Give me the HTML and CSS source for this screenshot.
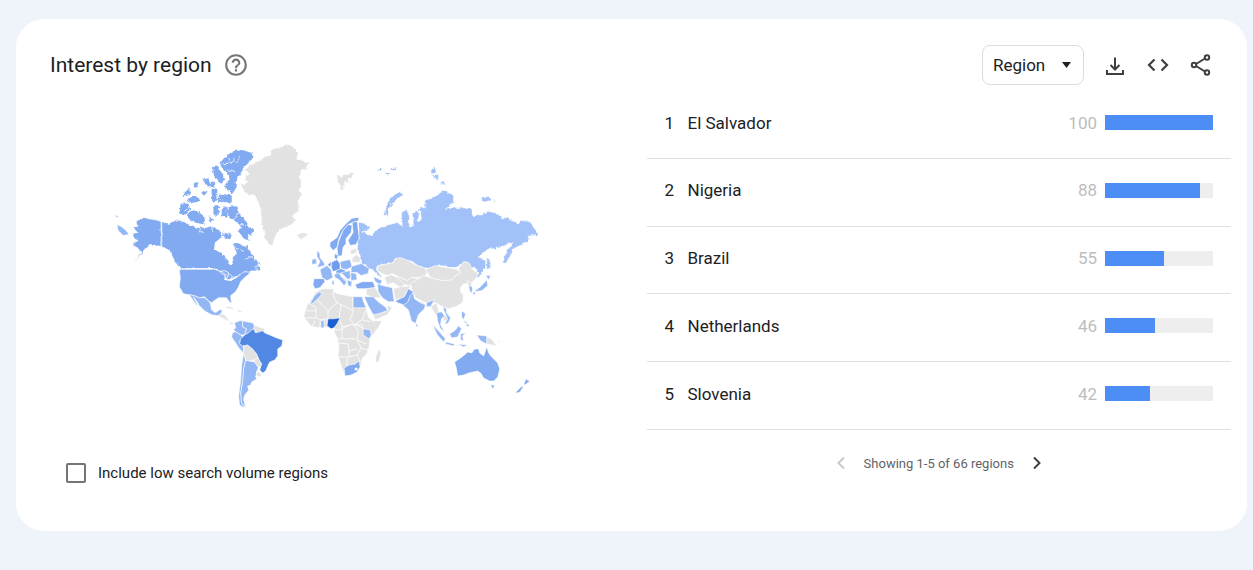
FILE: index.html
```html
<!DOCTYPE html>
<html lang="en">
<head>
    <meta charset="UTF-8">
    <meta name="viewport" content="width=device-width, initial-scale=1.0">
    <title>Interest by region</title>
    <link rel="stylesheet" href="styles.css">
</head>
<body>
    <main class="card">
        <header class="card-header">
            <h1>Interest by region</h1>
            <button class="icon-button help" aria-label="Help">
                <svg width="26" height="26" viewBox="0 0 24 24" fill="currentColor"><path d="M11 18h2v-2h-2v2zm1-16C6.480 2 2 6.480 2 12s4.480 10 10 10 10-4.480 10-10S17.520 2 12 2zm0 18c-4.410 0-8-3.590-8-8s3.590-8 8-8 8 3.590 8 8-3.590 8-8 8zm0-14c-2.210 0-4 1.790-4 4h2c0-1.100.9-2 2-2s2 .9 2 2c0 2-3 1.750-3 5h2c0-2.250 3-2.500 3-5 0-2.210-1.790-4-4-4z"/></svg>
            </button>
            <div class="tools">
                <div class="select-box">
                    <select id="resolution" aria-label="Resolution">
                        <option>Region</option>
                        <option>City</option>
                    </select>
                    <svg class="caret" width="9" height="6" viewBox="0 0 9 6"><path d="M0 0h9L4.500 6z" fill="#202124"/></svg>
                </div>
                <button class="icon-button" aria-label="Download">
                    <svg width="24" height="24" viewBox="0 0 24 24" fill="none" stroke="currentColor" stroke-width="2"><path d="M12 4.500v12M7.500 12l4.500 4.500 4.500-4.500M4 17v4h16v-4"/></svg>
                </button>
                <button class="icon-button" aria-label="Embed">
                    <svg width="24" height="24" viewBox="0 0 24 24" fill="none" stroke="currentColor" stroke-width="2.200"><path d="M8.500 6.500L3 12l5.500 5.500M15.500 6.500L21 12l-5.500 5.500"/></svg>
                </button>
                <button class="icon-button" aria-label="Share">
                    <svg width="24" height="24" viewBox="0 0 24 24" fill="none" stroke="currentColor" stroke-width="2"><circle cx="5" cy="12" r="2.200"/><circle cx="18" cy="4.500" r="2.200"/><circle cx="18" cy="19.500" r="2.200"/><path d="M7 11l9-5.500M7 13l9 5.500"/></svg>
                </button>
            </div>
        </header>

        <div class="content">
            <section class="map-panel">
                <svg class="map" viewBox="110 140 440 275" role="img" aria-label="World map">
                    <defs>
                        <filter id="coast" x="-5%" y="-5%" width="110%" height="110%">
                            <feTurbulence type="fractalNoise" baseFrequency="0.25" numOctaves="2" seed="4"/>
                            <feDisplacementMap in="SourceGraphic" scale="4" xChannelSelector="R" yChannelSelector="G"/>
                        </filter>
                    </defs>

                    <!-- North America -->
                    <g class="land mid" filter="url(#coast)">
                        <path d="M133 227L138 226 137 222 143 217 153 219 162 221 162 246 157 245 152 244 147 248 143 253 136 259 142 252 138 247 134 243 139 239 134 237 133 233 139 232z"/>
                        <path d="M162 221L170 223 178 219 185 222 192 225 198 227 207 227 213 225 218 229 223 231 222 237 216 242 215 248 222 253 227 257 231 265 234 263 233 257 237 253 234 245 235 242 240 243 245 247 248 245 253 255 259 263 261 268 254 270 250 271 246 272 240 274 232 278 228 279 224 274 218 269 214 268 182 268 175 260 170 250 162 246z"/>
                        <g transform="translate(110 140) scale(.3333)">
                            <path d="M330 70L345 52 370 33 400 30 425 38 432 52 415 70 400 85 390 105 378 125 382 140 370 160 355 152 343 135 360 125 358 105 340 88z"/>
                            <path d="M310 78L325 76 337 100 347 118 335 132 325 120 312 105z"/>
                            <path d="M213 190L237 190 242 205 227 224 211 218zM233 222L250 206 272 213 287 235 282 252 260 247 243 242z"/>
                            <path d="M223 155L245 145 240 165 220 170zM233 175L262 166 274 182 245 190zM253 128L268 126 264 142 254 142zM279 117L297 114 305 136 290 140zM280 150L294 153 287 168 280 164z"/>
                            <path d="M306 148L320 148 322 182 308 184zM327 160L367 164 367 187 325 185zM311 195L329 195 329 222 313 227zM337 203L354 199 354 232 336 227zM299 223L314 240 302 247zM304 125L318 130 316 143 304 140z"/>
                            <path d="M360 198L380 198 387 217 402 230 414 250 430 270 427 287 414 281 420 302 400 291 383 270 395 262 380 245 362 232 350 215zM343 273L367 284 361 297 340 290z"/>
                        </g>
                        <path class="lines" d="M222 164l8-1 5-4M229 158l4 6M236 172l-8-3M240 157l-3 6M191 211l6-5 3 8M185 211l4-3M230 193l6 6M240 213l-7 6M246 224l-9 1M201 225l-2 6 5 1M212 225l1 6M236 247l8 4M219 196l4 4M252 256l-7 3"/>
                        <path d="M256 267L260 265 262 270 257 270zM141 255L137 259 135 260z"/>
                    </g>
                    <g class="land mid">
                        <path d="M182 268.500L214 268.500 222 271 227 274 225 279 231 280 238 276 243 272 247 271 250 273 245 277 241 281 239 286 236 291 231 295 232 303 229 300 227 297 219 297 212 302 209 300 205 296 200 297 195 295 184 293 180 286 181 277 180 270z"/>
                    </g>
                    <path class="lines" d="M162.500 220V246M182 268.500H214M220 271l5-1 4 2-1 5-2 2-1-5-3-1zM229 273l4 3-4 4M231 280l7-4"/>
                    <g class="land soft">
                        <path d="M190 294L195 295 200 297 205 297 209 300 211 303 212 309 216 312 220 309 223 309 221 314 218 315 212 314 205 310 200 305 197 300 194 296 199 306 196 303z"/>
                        <path d="M118 224L122 226 127 230 130 234 124 235 119 230zM116 214L120 217 117 217z"/>
                    </g>
                    <g class="land none">
                        <path d="M218 315L223 313 227 316 230 321 226 319 222 317zM230 321L236 323 231 324zM224 306L231 306 236 309 229 308zM238 309L244 311 239 312z"/>
                    </g>

                    <!-- Greenland, Iceland, Svalbard -->
                    <g class="land none" filter="url(#coast)">
                        <path transform="translate(230 140) scale(.3333)" d="M60 75L85 62 110 50 125 42 120 30 150 22 170 13 190 20 205 38 200 55 225 65 240 68 230 85 215 90 210 110 216 130 208 150 214 165 205 180 210 200 200 215 185 230 200 240 180 255 160 262 145 275 135 290 128 316 112 308 105 290 100 265 95 250 98 225 92 205 85 180 75 165 50 160 33 135 55 125 45 115 60 100 48 90z"/>
                        <path d="M297 235L302 232 308 233 306 236 301 239z"/>
                        <path d="M336 176L343 175 352 172 355 175 348 178 350 183 345 182 343 191 340 187 338 180z"/>
                    </g>

                    <!-- South America -->
                    <g class="land soft">
                        <path d="M235 322L240 320 243 320 243 326 247 328 245 334 241 334 236 331 234 329 236 327z"/>
                        <path d="M243 320L247 321 253 322 256 327 252 329 250 332 245 334 247 328 243 326z"/>
                        <path d="M233 332L236 331 241 334 245 338 240 340 241 343 244 346 244 352 240 348 236 342 232 336z"/>
                        <path d="M246 359L250 360 255 361 259 366 257 371 256 376 257 378 252 381 251 384 248 385 249 389 245 394 244 398 246 406 242 402 241 392 243 380 244 367z"/>
                        <path d="M244 352L246 359 244 367 243 380 241 392 242 402 246 407 240 404 239 395 241 380 242 365z"/>
                    </g>
                    <g class="land none">
                        <path d="M255 324L259 326 265 328 264 331 257 332 254 328z"/>
                        <path d="M244 345L248 344 253 348 257 353 258 357 254 359 250 360 246 359 244 352z"/>
                        <path d="M254 359L258 357 261 361 262 365 258 366z"/>
                        <path d="M257 370L262 373 261 376 257 375z"/>
                    </g>
                    <path class="land brazil" d="M241 338L245 334 249 332 252 329 254 328 256 332 263 330 265 332 270 334 277 337 283 339 282 345 278 348 278 355 275 359 270 361 268 365 266 370 263 372 260 369 262 363 259 358 257 353 253 348 248 344 243 345 240 343z"/>

                    <!-- Russia and the Arctic islands -->
                    <g class="land russia" filter="url(#coast)">
                        <path d="M358 222L365 223 370 227 369 230 363 231 367 234 372 235 375 230 380 227 385 226 390 224 397 222 402 226 401 213 405 209 409 214 409 225 412 226 412 214 416 210 419 213 418 220 421 220 420 211 417 208 425 207 424 202 430 197 437 195 443 189 453 195 453 202 445 209 453 207 470 208 472 215 478 215 487 211 498 213 500 217 507 218 517 223 520 220 528 221 535 230 537 236 532 235 527 236 528 241 520 245 513 247 511 253 505 263 503 262 503 255 512 242 510 242 500 247 487 249 482 253 478 257 485 260 485 267 478 277 475 277 478 272 475 268 470 267 467 262 463 261 458 266 452 266 438 265 433 267 425 268 420 266 412 262 400 258 395 258 393 262 378 265 377 270 382 277 378 275 373 270 368 267 362 264 360 255 357 250 358 240 359 230z"/>
                        <path d="M383 215L385 207 389 199 400 191 403 194 393 202 389 208 388 216z"/>
                        <path d="M430 171L434 166 436 172 432 174zM431 175L438 174 438 181zM439 184L443 180 445 185zM480 198L488 196 490 200 483 202zM492 199L497 201 493 201zM376 170L381 168 382 171zM384 172L390 173 387 175zM390 168L397 167 395 171zM486 257L489 259 489 268 486 269z"/>
                    </g>

                    <!-- Europe -->
                    <g class="land mid">
                        <path d="M330 242L337 237 340 230 346 223 352 218 358 217 359 220 353 222 348 224 343 230 339 238 337 247 333 250 330 246z"/>
                        <path d="M339 240L343 230 348 224 352 225 351 232 346 238 346 243 343 247 342 255 338 256 337 248z"/>
                        <path d="M352 222L357 221 358 228 359 238 356 244 350 245 348 240 353 232z"/>
                        <path d="M314 278L324 278 325 281 320 287 315 288 313 284z"/>
                        <path d="M355 284L362 281 373 281 375 287 367 288 357 288z"/>
                        <path d="M331 262L337 259 340 263 340 269 333 271 331 266zM328 264l3-3 1 4-3 1z" class="strong"/>
                        <path d="M334 257L335 253 338 255 337 259zM336 270L341 268 346 270 344 273 336 273z"/>
                    </g>
                    <g class="land soft">
                        <path d="M317 250L320 253 320 257 324 262 325 265 317 267 320 261 317 256z"/>
                        <path d="M312 259L316 258 317 263 312 264z"/>
                        <path d="M320 269L327 265 331 269 333 277 327 280 322 277z"/>
                        <path d="M340 261L350 259 352 266 347 269 341 268z"/>
                        <path d="M351 266L361 263 369 268 368 273 361 275 357 272 351 272z"/>
                        <path d="M334 274L339 272 341 276 347 281 344 285 339 279 335 277z"/>
                        <path d="M341 272L350 270 351 277 348 279zM350 272L356 273 357 279 351 280zM347 279L352 281 351 286 348 285zM373 276L382 280 380 284 375 281zM332 280h2v4h-2z"/>
                    </g>
                    <g class="land none">
                        <path d="M350 250L356 248 357 252 351 254zM352 258L356 254 360 257 360 262 352 262zM343 277l3 1 1 4-3-3z"/>
                    </g>

                    <!-- Asia -->
                    <g class="land none">
                        <path d="M378 265L393 262 395 258 400 257 408 260 415 264 423 267 428 270 424 276 418 277 411 277 407 280 400 277 392 273 387 275 382 273 377 270z"/>
                        <path d="M384 277L391 274 399 278 404 284 401 287 393 282 387 284z"/>
                        <path d="M393 275L400 277 407 280 411 277 419 278 417 283 409 285 404 284 399 279z"/>
                        <path d="M393 288L400 286 411 285 406 291 403 297 395 299z"/>
                        <path d="M410 283L417 279 423 275 430 277 442 280 452 279 455 275 460 272 458 268 463 261 468 262 472 269 478 273 475 278 470 283 463 283 460 287 460 291 463 295 462 302 455 306 448 308 442 306 435 302 425 302 415 297 412 290z"/>
                        <path d="M425 269L435 265 440 266 453 268 459 270 460 272 455 275 452 279 442 280 430 277z"/>
                        <path d="M366 288L375 287 381 297 374 297 366 294zM373 314L387 310 387 304 392 307 387 314 375 319z"/>
                        <path d="M430 306L436 302 438 309 438 318 434 312zM442 315L447 315 447 320 443 320zM466 280l5 2 0 4-3-1zM416 300l8 2v2l-7-2z"/>
                        <path d="M486 336L491 338 496 345 486 343zM497 340l3-1-2 3z"/>
                    </g>
                    <g class="land soft">
                        <path d="M377 283L383 285 392 287 394 301 388 301 382 297 378 291z"/>
                        <path d="M364 296L373 296 378 301 386 307 387 310 378 313 373 314 368 305z"/>
                        <path d="M402 304L408 300 410 293 413 292 414 298 420 302 425 304 424 308 418 314 415 323 411 320 408 309z"/>
                        <path d="M426 302L434 299 430 306 426 306zM415 322l3 3-2 1z"/>
                        <path d="M436 312L441 311 444 315 441 318 440 324 444 331 440 328 437 320z"/>
                        <path d="M442 306L446 308 446 312 450 317 448 322 444 324 447 318z"/>
                        <path d="M432 324L438 330 445 338 443 341 437 334zM445 341L454 343 453 345 445 343zM449 333L454 330 458 325 461 328 457 336 451 337zM460 333L465 332 462 335 463 340 460 339zM457 343l10 1-4 2z"/>
                        <path d="M461 310L465 313 463 319 461 316zM466 322l3 3-3 1zM463 319l4 3-2 1z"/>
                        <path d="M476 334L486 335 486 343 480 340zM468 284L472 287 471 293 469 290zM485 275L490 275 488 279zM486 279L487 285 481 290 473 291 480 286zM472 291l3 1-2 3z"/>
                    </g>
                    <path class="land mid" d="M395 300L404 296 408 288 413 291 410 295 407 302 403 304 397 302z"/>

                    <!-- Africa -->
                    <path class="land none" d="M315 292L322 288 333 288 335 292 342 294 353 296 362 297 366 307 368 316 372 320 382 320 378 327 370 337 369 345 367 352 362 358 360 365 353 372 345 375 342 367 338 355 339 345 337 337 334 330 335 327 328 326 320 327 312 326 305 318 304 315 307 305 312 298z"/>
                    <path class="lines" d="M318 291l-1 6-9 6M310 303l6 4 0 10-11 0M316 298l12 12 9-8-4-8 1-6M337 302l4 2 12 6M353 296v16l-3 6 4 6 8 0M341 304l-2 13M366 309l-4 10-8 5M339 317l3 9 8-2 4 0M316 317l5 2 7-1M327 325l0-7M320 327v-7M312 326l3-6M362 319l8 2M362 324l2 10M350 324l-10 5-5 0M354 324l4 6-1 9 4 8M342 326l0 12-5 0M338 342l10 1 1 7 8-2M349 350l0 6-11 0M357 339l9 4M361 347l7 2M349 356l8-2 4-7M347 357l0 8M357 354l3 6-6 4M342 338l14 0M328 310l0 8M307 310l9 0M356 324l8 4"/>
                    <path class="land none" d="M379 348L381 352 378 362 375 360 376 354z"/>
                    <g class="land soft">
                        <path d="M353 296L362 296 363 300 366 307 353 307z"/>
                        <path d="M310 303L314 296 319 291 322 293 318 298 312 303z"/>
                        <path d="M363 328L370 329 371 334 369 338 363 334zM321 320L324 320 324 327 321 327z"/>
                    </g>
                    <path class="land mid" d="M344 367L349 364 355 363 359 360 360 366 357 371 351 374 345 375z"/>
                    <circle cx="356" cy="368" r="1.500" fill="#fff"/>
                    <path class="land top" d="M328 318L334 318 340 317 337 323 334 327 331 328 327 325z"/>

                    <!-- Oceania -->
                    <g class="land mid">
                        <path d="M454 361L460 357 465 353 467 351 471 352 474 348 478 348 479 352 483 355 486 346 488 352 490 355 497 362 499 368 497 376 493 380 489 380 483 377 480 372 477 370 468 372 463 374 457 375 456 368z"/>
                        <path d="M490 384L494 384 492 388zM523 383L525 378 529 380 524 384zM523 385L519 391 514 392 520 386z"/>
                    </g>
                </svg>
                <label class="low-volume">
                    <input type="checkbox">
                    Include low search volume regions
                </label>
            </section>

            <section class="list-panel">
                <table>
                    <tbody>
                        <tr>
                            <td class="rank">1</td>
                            <td class="name">El Salvador</td>
                            <td class="value">100</td>
                            <td class="bar"><div class="track"><div class="fill" style="width: 100%"></div></div></td>
                        </tr>
                        <tr>
                            <td class="rank">2</td>
                            <td class="name">Nigeria</td>
                            <td class="value">88</td>
                            <td class="bar"><div class="track"><div class="fill" style="width: 88%"></div></div></td>
                        </tr>
                        <tr>
                            <td class="rank">3</td>
                            <td class="name">Brazil</td>
                            <td class="value">55</td>
                            <td class="bar"><div class="track"><div class="fill" style="width: 55%"></div></div></td>
                        </tr>
                        <tr>
                            <td class="rank">4</td>
                            <td class="name">Netherlands</td>
                            <td class="value">46</td>
                            <td class="bar"><div class="track"><div class="fill" style="width: 46%"></div></div></td>
                        </tr>
                        <tr>
                            <td class="rank">5</td>
                            <td class="name">Slovenia</td>
                            <td class="value">42</td>
                            <td class="bar"><div class="track"><div class="fill" style="width: 42%"></div></div></td>
                        </tr>
                    </tbody>
                </table>
                <nav class="pager">
                    <button class="icon-button" aria-label="Previous" disabled>
                        <svg width="24" height="24" viewBox="0 0 24 24" fill="none" stroke="currentColor" stroke-width="2"><path d="M15 6.500L9.500 12l5.500 5.500"/></svg>
                    </button>
                    <span>Showing 1-5 of 66 regions</span>
                    <button class="icon-button" aria-label="Next">
                        <svg width="24" height="24" viewBox="0 0 24 24" fill="none" stroke="currentColor" stroke-width="2"><path d="M9 6.500l5.500 5.500L9 17.500"/></svg>
                    </button>
                </nav>
            </section>
        </div>
    </main>
</body>
</html>
```

FILE: styles.css
```css
* {
    box-sizing: border-box;
}

body {
    margin: 0;
    padding: 19px 6px 38px 16px;
    background-color: #eff3fa;
    color: #202124;
    font-family: Roboto, "Liberation Sans", sans-serif;
    font-size: 17px;
}

.card {
    background-color: #fff;
    border-radius: 28px;
    padding: 26px 16px 48px 34px;
}

.card-header {
    display: flex;
    align-items: center;
    height: 40px;
    padding-right: 18px;
}

h1 {
    margin: 0;
    font-size: 21px;
    font-weight: 400;
}

.icon-button {
    display: flex;
    padding: 0;
    border: none;
    background: none;
    color: #3c4043;
    cursor: pointer;
}

.icon-button:disabled {
    color: #c8c8c8;
    cursor: default;
}

.help {
    margin-left: 11px;
    color: #757575;
}

.tools {
    display: flex;
    align-items: center;
    gap: 19px;
    margin-left: auto;
}

.select-box {
    display: grid;
    align-items: center;
}

.select-box select,
.caret {
    grid-area: 1 / 1;
}

.select-box select {
    appearance: none;
    width: 102px;
    height: 40px;
    padding: 0 10px;
    border: 1px solid #dadce0;
    border-radius: 8px;
    background-color: #fff;
    color: #202124;
    font-family: inherit;
    font-size: 17px;
}

.caret {
    justify-self: end;
    margin-right: 13px;
    pointer-events: none;
}

.content {
    display: grid;
    grid-template-columns: 1fr 1fr;
    gap: 12px;
}

.map-panel {
    display: flex;
    flex-direction: column;
    padding: 55px 16px 0;
}

.map {
    display: block;
    width: 80%;
    margin-left: 43px;
}

.land {
    stroke: #fff;
    stroke-width: 0.6;
    stroke-linejoin: round;
}

.lines {
    fill: none;
    stroke: #fff;
    stroke-width: 0.8;
}

.none {
    fill: #e2e2e2;
}

.russia {
    fill: #a2c1f8;
}

.soft {
    fill: #93b6f5;
}

.mid {
    fill: #81aaf0;
}

.strong {
    fill: #6f9dec;
}

.brazil {
    fill: #5088e3;
}

.top {
    fill: #1b5fd3;
}

.low-volume {
    display: flex;
    align-items: center;
    gap: 12px;
    margin-top: 47px;
    font-size: 15px;
}

.low-volume input {
    appearance: none;
    width: 20px;
    height: 20px;
    margin: 0;
    border: 2px solid #757575;
    border-radius: 2px;
}

.list-panel {
    padding-top: 7px;
}

table {
    width: 100%;
    height: 338px;
    border-collapse: collapse;
}

td {
    padding: 0 0 4px;
    border-bottom: 1px solid #e0e0e0;
}

.rank {
    width: 41px;
    padding-left: 18px;
}

.value {
    padding-right: 8px;
    color: #bdbdbd;
    text-align: right;
}

.bar {
    width: 126px;
    padding-right: 18px;
}

.track {
    height: 15px;
    background-color: #eee;
}

.fill {
    height: 15px;
    background-color: #4c8df6;
}

.pager {
    display: flex;
    align-items: center;
    justify-content: center;
    gap: 11px;
    margin-top: 21px;
    color: #5f6368;
    font-size: 13px;
}
```
